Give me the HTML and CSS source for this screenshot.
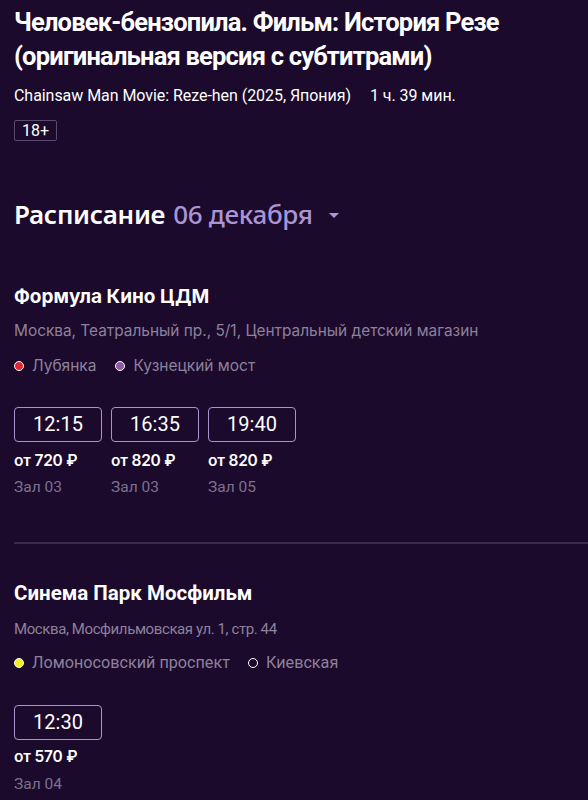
FILE: index.html
```html
<!DOCTYPE html>
<html lang="ru">
<head>
<meta charset="utf-8">
<link rel="stylesheet" href="styles.css">
</head>
<body>
<div class="page">
  <h1 class="title">Человек-бензопила. Фильм: История Резе (оригинальная версия с субтитрами)</h1>
  <div class="meta"><span>Chainsaw Man Movie: Reze-hen (2025, Япония)</span><span>1 ч. 39 мин.</span></div>
  <div class="age">18+</div>

  <h2 class="schedule">Расписание <span class="date">06 декабря</span><span class="caret"></span></h2>

  <section class="cinema inter">
    <div class="cinema-name">Формула Кино ЦДМ</div>
    <div class="address">Москва, Театральный пр., 5/1, Центральный детский магазин</div>
    <div class="metro">
      <span class="station"><span class="dot red"></span>Лубянка</span>
      <span class="station"><span class="dot violet"></span>Кузнецкий мост</span>
    </div>
    <div class="sessions">
      <div class="session"><div class="time">12:15</div><div class="price">от 720 ₽</div><div class="hall">Зал 03</div></div>
      <div class="session"><div class="time">16:35</div><div class="price">от 820 ₽</div><div class="hall">Зал 03</div></div>
      <div class="session"><div class="time">19:40</div><div class="price">от 820 ₽</div><div class="hall">Зал 05</div></div>
    </div>
  </section>

  <hr class="divider">

  <section class="cinema roboto second">
    <div class="cinema-name">Синема Парк Мосфильм</div>
    <div class="address">Москва, Мосфильмовская ул. 1, стр. 44</div>
    <div class="metro">
      <span class="station"><span class="dot yellow"></span>Ломоносовский проспект</span>
      <span class="station"><span class="dot ring"></span>Киевская</span>
    </div>
    <div class="sessions">
      <div class="session"><div class="time">12:30</div><div class="price">от 570 ₽</div><div class="hall">Зал 04</div></div>
    </div>
  </section>
</div>
</body>
</html>
```

FILE: styles.css
```css
html, body {
  margin: 0;
  padding: 0;
  background: #1b0a2c;
  color: #ffffff;
}
.page {
  padding: 5px 0 0 14px;
  font-family: Roboto, "Liberation Sans", sans-serif;
}
.title {
  margin: 0;
  font-family: Roboto, "Noto Sans", sans-serif;
  font-weight: 700;
  font-size: 25.5px;
  line-height: 34px;
  letter-spacing: -0.8px;
  padding-right: 10px;
}
.meta {
  margin-top: 13px;
  font-size: 16px;
  line-height: 20px;
  letter-spacing: -0.05px;
  display: flex;
  gap: 19px;
}
.age {
  margin-top: 14px;
  width: fit-content;
  border: 1px solid #5a4a70;
  border-radius: 2px;
  font-size: 16px;
  line-height: 19px;
  padding: 0 7px;
}
.schedule {
  margin: 58px 0 0;
  font-family: "Noto Sans", "Open Sans", sans-serif;
  font-weight: 600;
  font-size: 26px;
  line-height: 30px;
  letter-spacing: -0.3px;
  display: flex;
  align-items: center;
}
.date {
  margin-left: 8px;
  color: #a995d4;
  font-weight: 500;
}
.caret {
  margin-left: 16px;
  width: 0;
  height: 0;
  border-left: 5px solid transparent;
  border-right: 5px solid transparent;
  border-top: 5px solid #a995d4;
  margin-top: 2px;
}
.cinema {
  margin-top: 56px;
}
.inter { font-family: Inter, Roboto, sans-serif; }
.roboto { font-family: Roboto, Inter, sans-serif; }
.cinema-name {
  font-weight: 700;
  font-size: 19px;
  line-height: 24px;
}
.address {
  margin-top: 12px;
  font-size: 15.4px;
  line-height: 20px;
  color: #8d819c;
}
.metro {
  margin-top: 15px;
  display: flex;
  gap: 19px;
  font-size: 15.5px;
  line-height: 20px;
  color: #8d819c;
}
.station {
  display: flex;
  align-items: center;
  gap: 8px;
}
.dot {
  width: 10px;
  height: 10px;
  border-radius: 50%;
  box-sizing: border-box;
}
.red { background: #e0262f; border: 1px solid #ffffff; }
.violet { background: #8e5aa6; border: 1px solid #ffffff; }
.yellow { background: #f3ee1e; border: 1px solid #ffffff; }
.ring { border: 1.5px solid #ffffff; }
.sessions {
  margin-top: 31px;
  display: flex;
  gap: 9px;
}
.session {
  display: flex;
  flex-direction: column;
}
.time {
  width: 88px;
  height: 35px;
  box-sizing: border-box;
  border: 1px solid #a794cf;
  border-radius: 4px;
  font-family: Roboto, sans-serif;
  font-size: 20px;
  line-height: 33px;
  text-align: center;
}
.price {
  margin-top: 9px;
  font-family: Inter, Roboto, sans-serif;
  font-weight: 600;
  font-size: 15.5px;
  line-height: 20px;
  letter-spacing: -0.2px;
}
.hall {
  margin-top: 6px;
  font-family: Roboto, sans-serif;
  font-size: 15.5px;
  line-height: 20px;
  color: #7d7190;
}
.divider {
  margin: 45px 0 0;
  border: 0;
  height: 2px;
  background: #3a2a4d;
}
.second {
  margin-top: 37px;
}
.second .cinema-name { font-size: 20.5px; }
.second .address { margin-top: 14px; font-size: 15px; letter-spacing: -0.4px; }
.second .metro { margin-top: 14px; font-size: 16.2px; gap: 18px; }
.second .sessions { margin-top: 32px; }
.second .price { margin-top: 7px; }
.second .hall { margin-top: 7px; }
```
